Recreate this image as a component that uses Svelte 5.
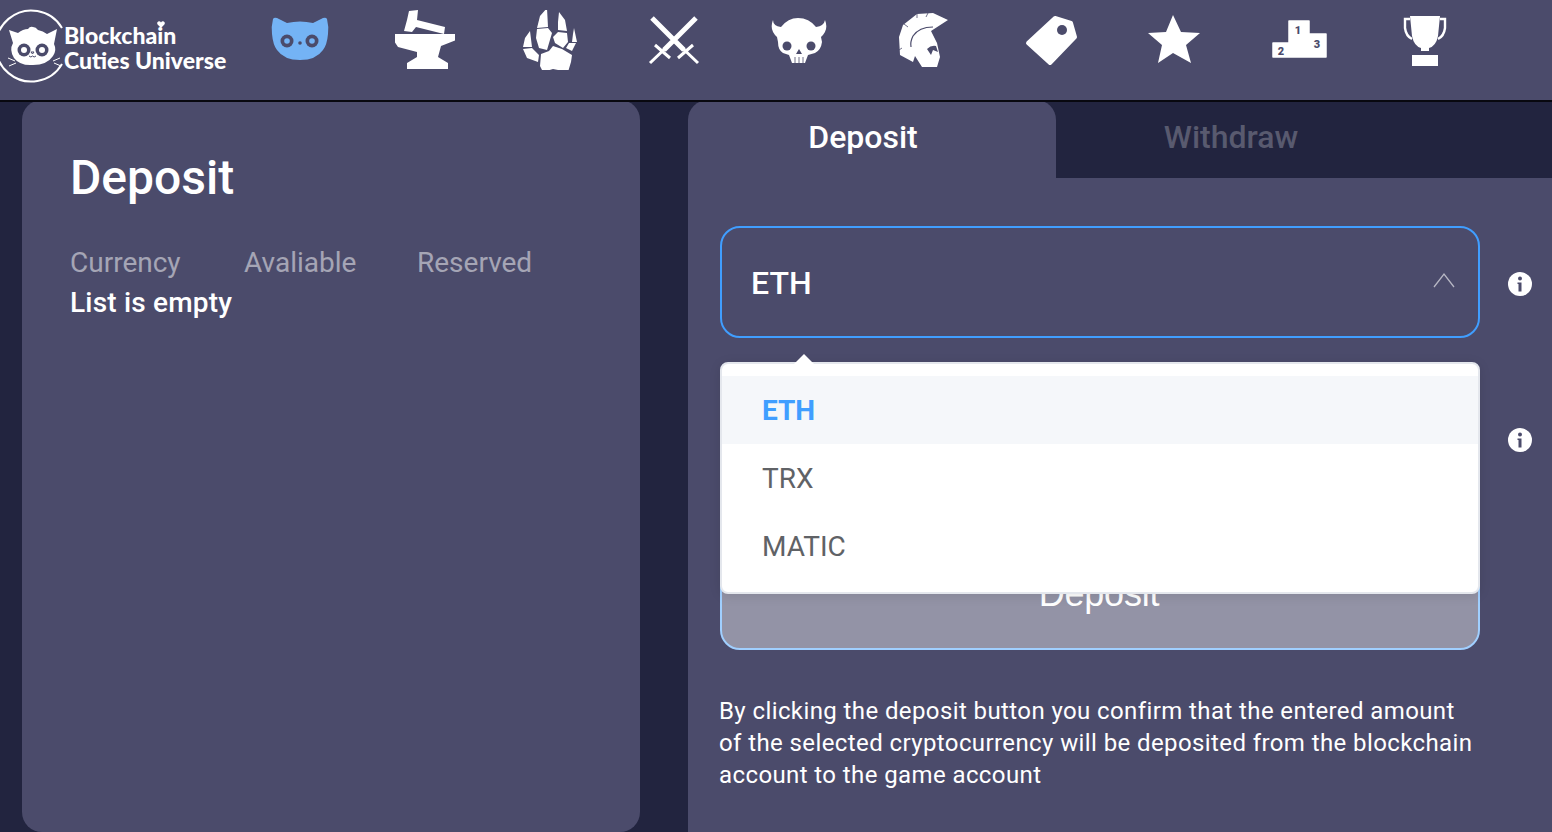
<script>
  const items = [
    { label: 'ETH', selected: true },
    { label: 'TRX', selected: false },
    { label: 'MATIC', selected: false }
  ];
  const columns = ['Currency', 'Avaliable', 'Reserved'];
</script>

<div class="page">
  <header class="top">
    <a class="logo" href="#top" aria-label="Blockchain Cuties Universe">
      <svg class="logo-mark" viewBox="0 0 64 92" width="64" height="92" aria-hidden="true">
        <path d="M62 28A35.500 35.500 0 1 0 62 64" fill="none" stroke="#fff" stroke-width="2"/>
        <path d="M9 30 18 33Q23 29 28 29 30 26 33 27 36 27 38 30 43 31 47 34L57 29 54 44Q57 50 53 56 47 65 33 65 20 66 14 58 9 50 13 43Z" fill="#fff"/>
        <circle cx="24" cy="50" r="6.500" fill="#4b4b6b"/><circle cx="24" cy="50" r="3" fill="#fff"/>
        <circle cx="42" cy="50" r="6.500" fill="#4b4b6b"/><circle cx="42" cy="50" r="3" fill="#fff"/>
        <path d="M31 52h3l-1.500 2zM29 56q2 2 3.500 0 1.500 2 3.500 0" fill="none" stroke="#4b4b6b" stroke-width="1"/>
        <path d="M8 58 15 61M9 66 16 63M53 61 60 58M54 63 61 66" stroke="#fff" stroke-width="1"/>
      </svg>
      <span class="logo-text">Blockchain<br>Cuties Universe</span>
      <svg class="heart" viewBox="0 0 8 7" width="8" height="7" aria-hidden="true">
        <path d="M4 7 .6 3.500Q-.5 1.500 1.200.500 3 -.2 4 1.500 5 -.2 6.800.500 8.500 1.500 7.400 3.500Z" fill="#fff"/>
      </svg>
    </a>
    <nav class="icons">
      <svg viewBox="270 10 60 60" aria-hidden="true">
        <path d="M273 19Q274 17 277 18L287 23Q300 20 313 23L323 18Q326 17 327 19 329 27 328 34 327 45 323 50 316 60 300 60 284 60 277 50 273 45 272 34 271 27 273 19Z" fill="#74b3f5"/>
        <circle cx="287" cy="41" r="6.500" fill="#4b4b6b"/><circle cx="287" cy="41" r="2.800" fill="#74b3f5"/>
        <circle cx="312" cy="41" r="6.500" fill="#4b4b6b"/><circle cx="312" cy="41" r="2.800" fill="#74b3f5"/>
        <circle cx="300" cy="43" r="1.800" fill="#4b4b6b"/>
      </svg>
      <svg viewBox="395 10 60 60" aria-hidden="true" class="w">
        <path d="M409 11 418 10 417 20 445 27 444 34 416 27 412 32 404 31 407 20Z"/>
        <path d="M392 34H456V40L441 46 438 57 448 63V69H407V63L417 57 417 52 398 47 392 38Z"/>
      </svg>
      <svg viewBox="520 10 60 60" aria-hidden="true" class="w">
        <path d="M547 8 548 27 537 28 540 16ZM559 12 565 20 567 31 558 30 558 22ZM530 31 532 47 523 47 525 38ZM574 28 577 42 572 42 573 34Z"/>
        <path d="M537 29 548 28 552 33 547 50 539 48 536 38ZM558 32 567 33 568 42 563 48 555 43 553 37ZM569 43 576 43 572 51 566 48ZM523 49 532 48 539 55 538 62 527 58Z"/>
        <path d="M541 54 549 51 553 46 562 49 572 55 571 62 568 72 553 69 543 72 540 66Z"/>
      </svg>
      <svg viewBox="645 10 60 60" aria-hidden="true" class="sw">
        <path class="b" d="M652 18 684 50M696 18 664 50"/>
        <path class="g" d="M655 45 670 58M693 45 678 58M676 42 698 63M672 42 650 63"/>
      </svg>
      <svg viewBox="770 10 60 60" aria-hidden="true" class="w">
        <path d="M773 20Q773 26 781 27 788 18 798 18 809 18 816 27 824 26 825 20 829 30 821 37L822 42Q821 50 815 53L808 55 805 63H792L789 55 783 53Q778 50 778 42L777 37Q769 30 773 20Z"/>
        <circle cx="787" cy="46" r="4.500" fill="#4b4b6b"/><circle cx="811" cy="46" r="4.500" fill="#4b4b6b"/>
        <path d="M799 49 802 54H796Z" fill="#4b4b6b"/>
        <path d="M795 57V63M799 57V63M803 57V63" stroke="#4b4b6b" stroke-width="0.800"/>
      </svg>
      <svg viewBox="895 10 60 60" aria-hidden="true" class="w">
        <path d="M948 20 933 13 917 14 903 25 899 37 900 55 913 62 915 56 922 67H937L940 57 937 43 931 31Z"/>
        <path d="M933 27Q919 27 913 36 910 42 911 47" fill="none" stroke="#4b4b6b" stroke-width="1.200"/>
        <path d="M928 13 926 17M917 14 917 18M904 24 908 27M899 50 902 48" stroke="#4b4b6b" stroke-width="0.800"/>
        <path d="M927 49Q931 45 936 46L938 52 933 50 931 55Z" fill="#4b4b6b"/>
      </svg>
      <svg viewBox="1020 10 60 60" aria-hidden="true" class="w">
        <path d="M1055 18 1071 23 1075 37 1050 63 1028 43Z" stroke="#fff" stroke-width="4" stroke-linejoin="round"/>
        <circle cx="1062" cy="30" r="5" fill="#4b4b6b"/>
      </svg>
      <svg viewBox="1145 10 60 60" aria-hidden="true" class="w">
        <path d="M1173 15 1181 32 1200 33 1186 45 1191 63 1173 53 1158 63 1162 45 1148 33 1166 32Z"/>
      </svg>
      <svg viewBox="1270 10 60 60" aria-hidden="true" class="w">
        <path d="M1289 21H1309V34H1326V57H1273V43H1289Z" stroke="#fff" stroke-width="1.500" stroke-linejoin="round"/>
        <text x="1298" y="34" class="num">1</text>
        <text x="1281" y="55" class="num">2</text>
        <text x="1317" y="48" class="num">3</text>
      </svg>
      <svg viewBox="1395 10 60 60" aria-hidden="true" class="w">
        <path d="M1410 16H1440L1438 36Q1436 46 1429 48V51H1421V48Q1414 46 1412 36Z"/>
        <path d="M1412 55H1438V66H1412Z"/>
        <path d="M1410 19H1405V28Q1406 36 1412 39M1440 19H1445V28Q1444 36 1438 39" fill="none" stroke="#fff" stroke-width="2.400"/>
      </svg>
    </nav>
  </header>

  <main class="content">
    <section class="panel">
      <h1>Deposit</h1>
      <div class="cols">
        {#each columns as col}<span>{col}</span>{/each}
      </div>
      <p class="empty">List is empty</p>
    </section>

    <section class="card">
      <div class="tabs">
        <button class="tab active">Deposit</button>
        <button class="tab">Withdraw</button>
      </div>
      <div class="form">
        <div class="row">
          <div class="select">
            <span>ETH</span>
            <svg class="chev" viewBox="0 0 22 16" width="22" height="16" aria-hidden="true"><path d="M1 15 11 2 21 15" fill="none" stroke="#b7b7c4" stroke-width="1.300"/></svg>
          </div>
          <svg class="info" viewBox="0 0 24 24" width="24" height="24" aria-hidden="true">
            <circle cx="12" cy="12" r="12" fill="#fff"/><circle cx="12" cy="6.500" r="2" fill="#4b4b6b"/><path d="M9.500 10.500H13.500V19.500H10.500V12H9.500Z" fill="#4b4b6b"/>
          </svg>

          <div class="dropdown">
            <span class="arrow"></span>
            <ul>
              {#each items as item}
                <li class:selected={item.selected}>{item.label}</li>
              {/each}
            </ul>
          </div>
        </div>

        <div class="row">
          <div class="amount"></div>
          <svg class="info" viewBox="0 0 24 24" width="24" height="24" aria-hidden="true">
            <circle cx="12" cy="12" r="12" fill="#fff"/><circle cx="12" cy="6.500" r="2" fill="#4b4b6b"/><path d="M9.500 10.500H13.500V19.500H10.500V12H9.500Z" fill="#4b4b6b"/>
          </svg>
        </div>

        <button class="submit">Deposit</button>

        <p class="note">By clicking the deposit button you confirm that the entered amount of the selected cryptocurrency will be deposited from the blockchain account to the game account</p>
      </div>
    </section>
  </main>
</div>

<style>
  :global(body) {
    margin: 0;
    background: #22243f;
    overflow: hidden;
  }
  .page {
    height: 832px;
    overflow: hidden;
    font-family: Roboto, "Liberation Sans", sans-serif;
    color: #fff;
  }
  .top {
    position: relative;
    z-index: 2;
    display: flex;
    height: 100px;
    background: #4b4b6b;
    border-bottom: 2px solid #08080f;
  }
  .logo {
    position: relative;
    display: flex;
    align-items: flex-start;
    width: 237.500px;
    flex: none;
    color: #fff;
    text-decoration: none;
  }
  .logo-mark { display: block; flex: none; }
  .logo-text {
    margin-top: 23px;
    font-family: Lato, sans-serif;
    font-weight: 900;
    font-size: 23px;
    line-height: 25px;
    white-space: nowrap;
  }
  .heart {
    position: absolute;
    left: 157px;
    top: 21px;
  }
  .icons {
    display: flex;
    gap: 65px;
    padding: 10px 0 0 32.500px;
    align-items: flex-start;
  }
  .icons svg { width: 60px; height: 60px; flex: none; display: block; }
  .w { fill: #fff; }
  .sw path { fill: none; stroke: #fff; }
  .sw .b { stroke-width: 5; }
  .sw .g { stroke-width: 3; }
  .num {
    font-family: Roboto, sans-serif;
    font-size: 11px;
    font-weight: 900;
    fill: #4b4b6b;
    text-anchor: middle;
  }

  .content {
    display: flex;
    gap: 48px;
    height: 732px;
    margin-top: -2px;
    padding-left: 22px;
  }
  .panel {
    width: 618px;
    box-sizing: border-box;
    padding: 50px 48px;
    background: #4b4b6b;
    border-radius: 20px;
  }
  h1 {
    margin: 0;
    font-size: 48px;
    line-height: 56px;
    font-weight: 500;
  }
  .cols {
    display: grid;
    grid-template-columns: 174px 173px auto;
    margin-top: 37px;
    font-size: 28px;
    line-height: 40px;
    color: rgba(255, 255, 255, 0.5);
  }
  .empty {
    margin: 0;
    font-size: 28px;
    line-height: 40px;
    font-weight: 500;
    letter-spacing: 0.2px;
  }

  .card {
    flex: 1;
    min-width: 0;
    height: 800px;
    background: #4b4b6b;
    border-radius: 20px 0 0 0;
  }
  .tabs {
    display: flex;
    height: 78px;
    background: #22243f;
    overflow: hidden;
  }
  .tab {
    border: 0;
    width: 350px;
    font: 500 32px/70px Roboto, sans-serif;
    background: transparent;
    color: rgba(255, 255, 255, 0.25);
    padding: 0 0 4px;
    text-align: center;
  }
  .tab.active {
    width: 368px;
    padding: 0 18px 4px 0;
    background: #4b4b6b;
    color: #fff;
    border-radius: 20px 20px 0 0;
  }
  .form {
    padding: 48px 32px 0;
    display: flex;
    flex-direction: column;
    gap: 44px;
  }
  .row {
    position: relative;
    display: flex;
    align-items: center;
    gap: 28px;
  }
  .select {
    width: 760px;
    height: 112px;
    box-sizing: border-box;
    border: 2px solid #409eff;
    border-radius: 20px;
    display: flex;
    align-items: center;
    justify-content: space-between;
    padding: 2px 23px 0 29px;
    font-size: 32px;
    font-weight: 500;
    flex: none;
  }
  .chev { margin-bottom: 6px; }
  .info { flex: none; margin-top: 4px; }
  .amount {
    width: 760px;
    height: 112px;
    flex: none;
  }
  .dropdown {
    position: absolute;
    z-index: 3;
    left: 0;
    top: 136px;
    width: 760px;
    height: 232px;
    box-sizing: border-box;
    background: #fff;
    border: 2px solid #e4e7ed;
    border-radius: 8px;
    box-shadow: 0 2px 12px rgba(0, 0, 0, 0.1);
  }
  .arrow {
    position: absolute;
    top: -10px;
    left: 72px;
    width: 0;
    height: 0;
    border-left: 10px solid transparent;
    border-right: 10px solid transparent;
    border-bottom: 10px solid #fff;
  }
  ul {
    list-style: none;
    margin: 0;
    padding: 12px 0;
  }
  li {
    height: 68px;
    padding-left: 40px;
    font-size: 28px;
    line-height: 70px;
    color: #606266;
  }
  li.selected {
    background: #f5f7fa;
    color: #409eff;
    font-weight: 700;
  }
  .submit {
    width: 760px;
    height: 112px;
    box-sizing: border-box;
    border: 2px solid #a0cfff;
    border-radius: 20px;
    background: #9393a6;
    color: #fff;
    font: 400 36px/1 "Liberation Sans", sans-serif;
    letter-spacing: -0.2px;
    padding: 0 2px 0 0;
  }
  .note {
    margin: 1px 0 0 -1px;
    width: 760px;
    font-size: 24px;
    line-height: 32px;
    letter-spacing: 0.4px;
  }
</style>
